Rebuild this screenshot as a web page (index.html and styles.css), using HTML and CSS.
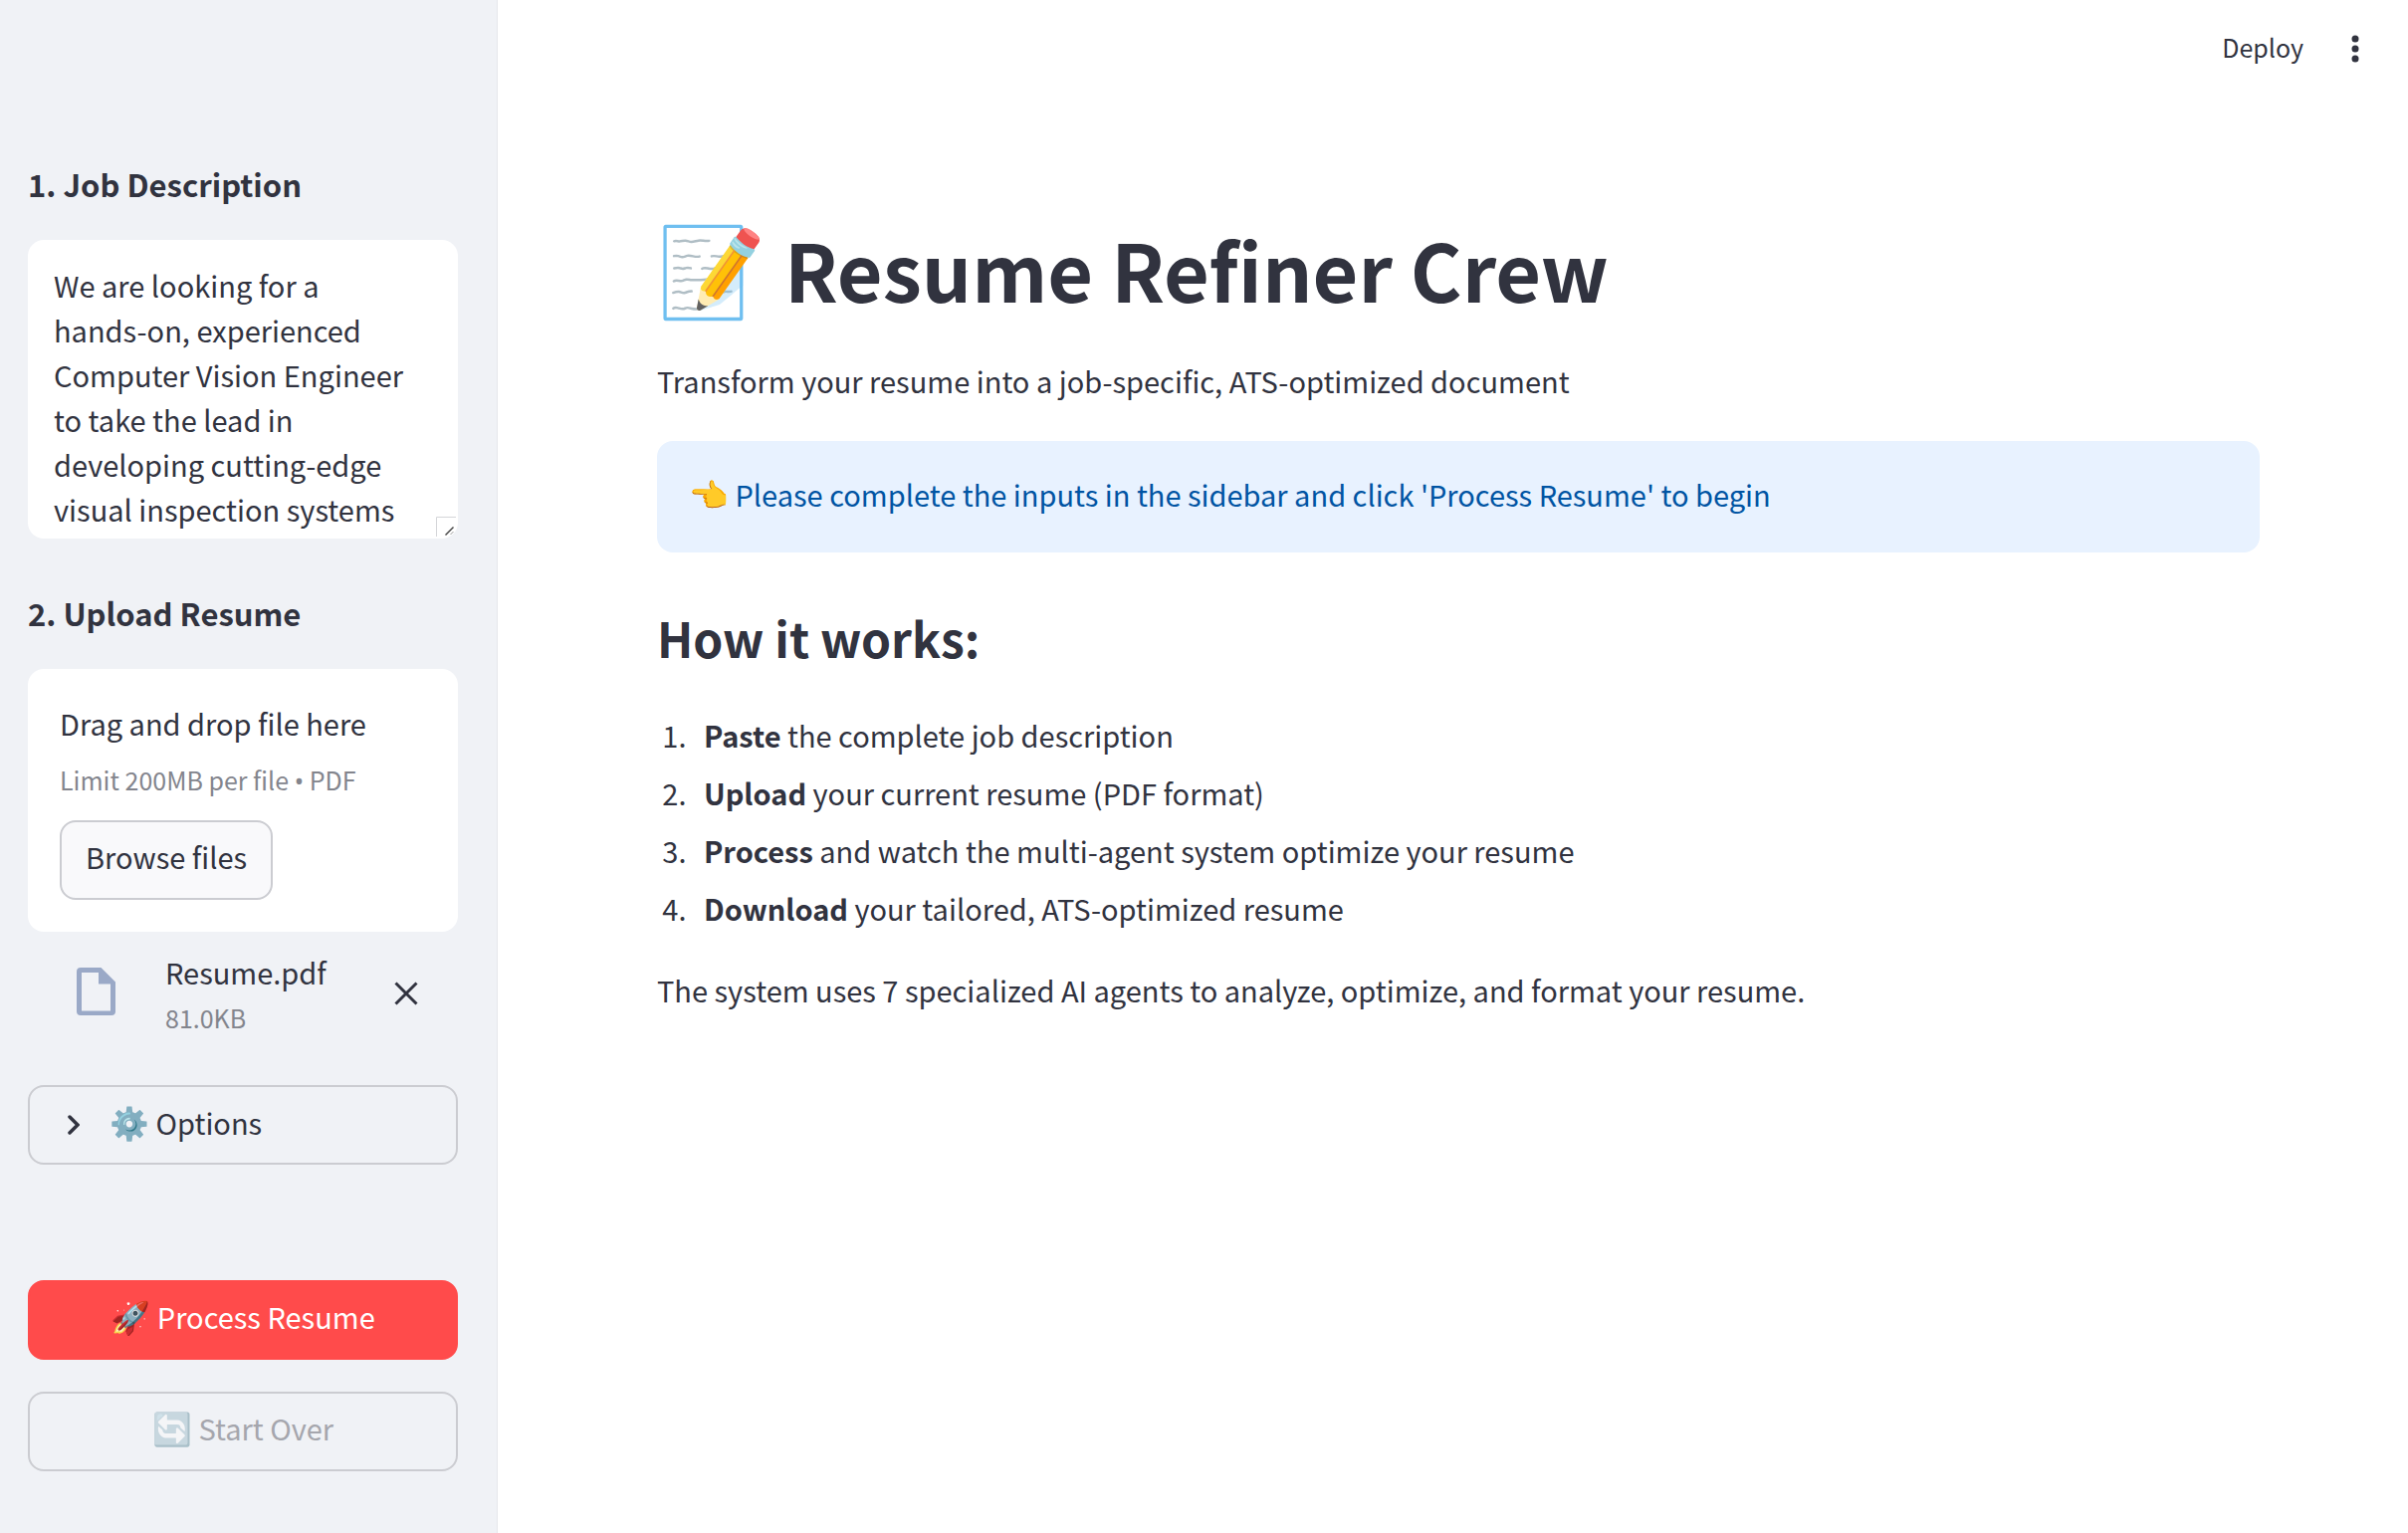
FILE: index.html
```html
<!DOCTYPE html>
<html lang="en">
<head>
<meta charset="utf-8">
<meta name="viewport" content="width=device-width, initial-scale=1">
<title>Resume Refiner Crew</title>
<link rel="stylesheet" href="styles.css">
</head>
<body>
<div class="app">
  <aside class="sidebar">
    <h3 class="side-title"><label for="job">1. Job Description</label></h3>
    <div class="job-box">
      <textarea id="job" class="job-input">We are looking for a hands-on, experienced Computer Vision Engineer to take the lead in developing cutting-edge visual inspection systems</textarea>
      <svg class="grip" viewBox="0 0 20 20" aria-hidden="true"><path d="M.5 20V.5H20" fill="none" stroke="#d5d6d9"/><path d="M9.5 18.500 17.500 10.500" stroke="#444" stroke-width="1.500"/><path d="M14.500 18 17.500 15" stroke="#999"/></svg>
    </div>

    <h3 class="side-title">2. Upload Resume</h3>
    <section class="dropzone">
      <p class="drop-text">Drag and drop file here</p>
      <p class="small drop-limit">Limit 200MB per file <span class="bullet">•</span> PDF</p>
      <button type="button" class="button browse">Browse files</button>
    </section>
    <div class="file">
      <svg class="file-icon" viewBox="0 0 39 48" aria-hidden="true"><path fill="#9aa9c7" fill-rule="evenodd" d="M4 0H24.500L39 14.500V44a4 4 0 0 1-4 4H4a4 4 0 0 1-4-4V4A4 4 0 0 1 4 0ZM5 5V43.500H34V16.500H22V5Z"/></svg>
      <div class="file-info">
        <span class="file-name">Resume.pdf</span>
        <span class="small">81.0KB</span>
      </div>
      <button type="button" class="remove" aria-label="Remove file"><svg viewBox="0 0 24 24" aria-hidden="true"><path d="M1.500 1.500 22.500 22.500M22.500 1.500 1.500 22.500" stroke="currentColor" stroke-width="3"/></svg></button>
    </div>

    <details class="options">
      <summary><svg class="chevron" viewBox="0 0 12 20" aria-hidden="true"><path d="M2 2 10 10 2 18" fill="none" stroke="currentColor" stroke-width="3.500" stroke-linecap="round"/></svg><span class="options-label"><span class="emoji">⚙️</span> Options</span></summary>
    </details>

    <button type="button" class="button primary"><span class="emoji">🚀</span> Process Resume</button>
    <button type="button" class="button restart" disabled><span class="emoji">🔄</span> Start Over</button>
  </aside>

  <div class="page">
    <header class="toolbar">
      <button type="button" class="deploy">Deploy</button>
      <button type="button" class="menu" aria-label="Main menu"><svg viewBox="0 0 8 28" aria-hidden="true"><circle cx="4" cy="4" r="3.500"/><circle cx="4" cy="14" r="3.500"/><circle cx="4" cy="24" r="3.500"/></svg></button>
    </header>
    <main class="content">
      <h1><span class="emoji">📝</span> Resume Refiner Crew</h1>
      <p class="lead">Transform your resume into a job-specific, ATS-optimized document</p>
      <div class="notice" role="status"><span class="emoji">👈</span> Please complete the inputs in the sidebar and click 'Process Resume' to begin</div>
      <h2>How it works:</h2>
      <ol class="steps">
        <li><strong>Paste</strong> the complete job description</li>
        <li><strong>Upload</strong> your current resume (PDF format)</li>
        <li><strong>Process</strong> and watch the multi-agent system optimize your resume</li>
        <li><strong>Download</strong> your tailored, ATS-optimized resume</li>
      </ol>
      <p>The system uses 7 specialized AI agents to analyze, optimize, and format your resume.</p>
    </main>
  </div>
</div>
</body>
</html>
```
FILE: styles.css
```css
* { box-sizing: border-box; }

body {
  margin: 0;
  background: #fff;
  color: #31333f;
  font: 29px/48px "Noto Sans CJK SC", "Noto Sans", sans-serif;
}

h1, h2, h3, p, ol { margin: 0; }

button, textarea {
  font: inherit;
  color: inherit;
}

.emoji {
  font-size: 32px;
  line-height: 1;
}

.app {
  display: flex;
  min-height: 100vh;
}

.sidebar {
  flex: none;
  display: flex;
  flex-direction: column;
  width: 500px;
  padding: 165px 39px 48px 28px;
  background: #f0f2f6;
  border-right: 1px solid #e6e8ec;
  line-height: 45px;
}

.side-title {
  height: 40px;
  margin-bottom: 36px;
  font-size: 31px;
  font-weight: 600;
  line-height: 40px;
}

.job-box {
  position: relative;
  height: 300px;
  margin-bottom: 55px;
}

.job-input {
  display: block;
  width: 100%;
  height: 100%;
  padding: 23px 50px 5px 26px;
  border: 0;
  border-radius: 16px;
  outline: 0;
  background: #fff;
  resize: none;
  overflow: hidden;
}

.grip {
  position: absolute;
  right: 2px;
  bottom: 2px;
  width: 20px;
  height: 20px;
}

.dropzone {
  padding: 32px;
  border-radius: 16px;
  background: #fff;
}

.small {
  color: #83858d;
  font-size: 25px;
  line-height: 40px;
}

.drop-limit { margin: 14px 0 21px; }

.bullet {
  font-family: "Noto Sans", sans-serif;
  line-height: 1;
}

.button {
  height: 80px;
  padding: 0 24px 7px;
  border: 2px solid #cbccd1;
  border-radius: 16px;
  background: transparent;
  line-height: 45px;
}

.browse {
  display: block;
  background: #f9f9fb;
}

.file {
  display: flex;
  align-items: center;
  margin: 18px 0 48px;
  padding: 0 40px 0 49px;
}

.file-icon {
  width: 39px;
  height: 48px;
  margin-bottom: 4px;
}

.file-info {
  display: flex;
  flex: 1;
  flex-direction: column;
  gap: 3px;
  margin-left: 50px;
}

.remove {
  display: flex;
  padding: 0;
  border: 0;
  background: none;
}

.remove svg {
  width: 24px;
  height: 24px;
}

.options {
  margin-bottom: 116px;
  border: 2px solid #cbccd1;
  border-radius: 16px;
}

.options summary {
  display: flex;
  align-items: center;
  gap: 30px;
  height: 76px;
  padding: 0 38px;
  list-style: none;
}

.options-label { padding-bottom: 6px; }

.chevron {
  width: 12px;
  height: 20px;
}

.primary {
  margin-bottom: 32px;
  border-color: #ff4b4b;
  background: #ff4b4b;
  color: #fff;
}

.restart { color: #a5a6ad; }

.restart .emoji { opacity: 0.4; }

.page {
  flex: 1;
  min-width: 0;
}

.toolbar {
  display: flex;
  align-items: center;
  justify-content: flex-end;
  gap: 48px;
  height: 98px;
  padding-right: 49px;
}

.toolbar button {
  padding: 0;
  border: 0;
  background: none;
}

.toolbar .deploy {
  padding-bottom: 4px;
  font-size: 25px;
  line-height: 40px;
}

.menu { display: flex; }

.menu svg {
  width: 8px;
  height: 28px;
  fill: currentColor;
}

.content { padding: 124px 149px 64px 160px; }

h1 {
  height: 96px;
  font-size: 79px;
  font-weight: 700;
  line-height: 96px;
}

h1 .emoji { font-size: 88px; }

.lead { margin-top: 40px; }

.notice {
  margin-top: 37px;
  padding: 31px 32px 36px;
  border-radius: 16px;
  background: #e8f2ff;
  color: #0054a3;
  line-height: 45px;
}

h2 {
  margin-top: 55px;
  font-size: 48px;
  font-weight: 600;
  line-height: 60px;
}

.steps {
  display: grid;
  gap: 10px;
  margin: 44px 0 34px;
  padding-left: 36px;
}

.steps li { padding-left: 11px; }

strong { font-weight: 600; }
```
